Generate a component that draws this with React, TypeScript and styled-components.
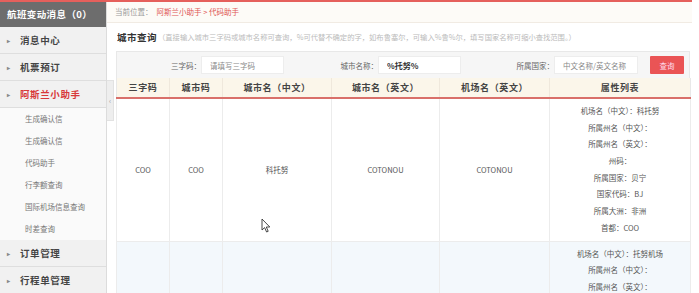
import styled, { createGlobalStyle } from "styled-components";

const GlobalStyle = createGlobalStyle`
  html, body {
    margin: 0;
    padding: 0;
    background: #fff;
    overflow: hidden;
  }
  body {
    font-family: "Noto Sans CJK SC", "Noto Sans", sans-serif;
    color: #555;
  }
`;

const SANS = `"Noto Sans CJK SC", "Noto Sans", sans-serif`;

const menuTop = [
  { label: "消息中心" },
  { label: "机票预订" },
  { label: "阿斯兰小助手", active: true },
];
const subItems = ["生成确认信", "生成确认信", "代码助手", "行李额查询", "国际机场信息查询", "时差查询"];
const menuBottom = ["订单管理", "行程单管理"];

const attrs1 = [
  "机场名（中文）：科托努",
  "所属州名（中文）：",
  "所属州名（英文）：",
  "州码：",
  "所属国家：贝宁",
  "国家代码：BJ",
  "所属大洲：非洲",
  "首都：COO",
];
const attrs2 = ["机场名（中文）：托努机场", "所属州名（中文）：", "所属州名（英文）：", "州码："];

const App = () => {
  return (
    <>
      <GlobalStyle />
      <Page>
        <TopLine />
        <Body>
          <Sidebar>
            <SideHeader>航班变动消息（0）</SideHeader>
            {menuTop.map((m) => (
              <MenuItem key={m.label} $active={m.active}>
                <Caret>▸</Caret>
                {m.label}
              </MenuItem>
            ))}
            <SubMenu>
              {subItems.map((s, i) => (
                <SubItem key={i}>{s}</SubItem>
              ))}
            </SubMenu>
            {menuBottom.map((m) => (
              <MenuItem key={m}>
                <Caret>▸</Caret>
                {m}
              </MenuItem>
            ))}
          </Sidebar>
          <Main>
            <Collapse>‹</Collapse>
            <Breadcrumb>
              当前位置：<Crumb>阿斯兰小助手 &gt; 代码助手</Crumb>
            </Breadcrumb>
            <Content>
              <TitleRow>
                <Title>城市查询</Title>
                <Hint>
                  （直接输入城市三字码或城市名称可查询，%可代替不确定的字，如布鲁塞尔，可输入%鲁%尔，填写国家名称可缩小查找范围。）
                </Hint>
              </TitleRow>
              <SearchBar>
                <Label $w={84}>三字码：</Label>
                <Input placeholder="请填写三字码" $w={83} />
                <Label $w={94}>城市名称：</Label>
                <Input defaultValue="%托努%" $w={83} $bold />
                <Label $w={93}>所属国家：</Label>
                <Input placeholder="中文名称/英文名称" $w={84} />
                <SearchButton>查询</SearchButton>
              </SearchBar>
              <Table>
                <colgroup>
                  <col style={{ width: 53 }} />
                  <col style={{ width: 53 }} />
                  <col style={{ width: 109 }} />
                  <col style={{ width: 108 }} />
                  <col style={{ width: 110 }} />
                  <col />
                </colgroup>
                <thead>
                  <tr>
                    <Th>三字码</Th>
                    <Th>城市码</Th>
                    <Th>城市名（中文）</Th>
                    <Th>城市名（英文）</Th>
                    <Th>机场名（英文）</Th>
                    <Th>属性列表</Th>
                  </tr>
                </thead>
                <tbody>
                  <tr>
                    <Td>COO</Td>
                    <Td>COO</Td>
                    <Td>科托努</Td>
                    <Td>COTONOU</Td>
                    <Td>COTONOU</Td>
                    <AttrCell>
                      {attrs1.map((a) => (
                        <AttrLine key={a}>{a}</AttrLine>
                      ))}
                    </AttrCell>
                  </tr>
                  <tr>
                    <Td $alt />
                    <Td $alt />
                    <Td $alt />
                    <Td $alt />
                    <Td $alt />
                    <AttrCell $alt>
                      {attrs2.map((a) => (
                        <AttrLine key={a}>{a}</AttrLine>
                      ))}
                    </AttrCell>
                  </tr>
                </tbody>
              </Table>
            </Content>
            <Cursor width="10" height="15" viewBox="0 0 10 15">
              <path d="M1 1 L1 12 L3.6 9.6 L5.6 14 L7.2 13.3 L5.3 9 L8.8 9 Z" fill="#fff" stroke="#333" strokeWidth="0.9" strokeLinejoin="round" />
            </Cursor>
          </Main>
        </Body>
      </Page>
    </>
  );
};

export default App;

const Page = styled.div`
  width: 692px;
  height: 293px;
  overflow: hidden;
`;

const TopLine = styled.div`
  height: 2px;
  background: #e5605c;
`;

const Body = styled.div`
  display: flex;
  align-items: flex-start;
`;

const Sidebar = styled.div`
  width: 106px;
  flex-shrink: 0;
  border-right: 1px solid #dcdcdc;
  background: #fafafa;
`;

const SideHeader = styled.div`
  height: 25px;
  line-height: 25px;
  padding-left: 7px;
  background: #6d6d6d;
  color: #fff;
  font-family: ${SANS};
  font-size: 9.5px;
  font-weight: bold;
  letter-spacing: 0.4px;
`;

const MenuItem = styled.div<{ $active?: boolean }>`
  display: flex;
  align-items: center;
  height: 26px;
  padding-left: 7px;
  background: #f1f1f1;
  border-bottom: 1px solid #dedede;
  color: ${(p) => (p.$active ? "#d8393a" : "#444")};
  font-family: ${SANS};
  font-size: 9.5px;
  font-weight: bold;
  letter-spacing: 0.6px;
`;

const Caret = styled.span`
  font-size: 6px;
  color: #888;
  width: 13px;
`;

const SubMenu = styled.div`
  background: #fafafa;
`;

const SubItem = styled.div`
  height: 22px;
  line-height: 22px;
  padding-left: 25px;
  font-size: 7.5px;
  color: #777;
`;

const Main = styled.div`
  position: relative;
  flex: 1;
  min-width: 0;
`;

const Collapse = styled.div`
  position: absolute;
  left: 0;
  top: 78px;
  width: 6px;
  height: 39px;
  background: #eee;
  border: 1px solid #e2e2e2;
  border-left: none;
  color: #999;
  font-size: 7px;
  line-height: 39px;
  text-align: center;
`;

const Breadcrumb = styled.div`
  height: 20px;
  line-height: 20px;
  padding-left: 8px;
  background: #fdfbf7;
  border-bottom: 1px solid #f1ebe3;
  font-size: 7.5px;
  color: #999;
`;

const Crumb = styled.span`
  color: #e05555;
  margin-left: 4px;
`;

const Content = styled.div`
  padding: 0 2px 0 9px;
`;

const TitleRow = styled.div`
  display: flex;
  align-items: center;
  height: 14px;
  margin: 7px 0 7px 1px;
  white-space: nowrap;
  overflow: hidden;
`;

const Title = styled.span`
  font-size: 9.5px;
  font-weight: bold;
  color: #333;
  letter-spacing: 0.5px;
`;

const Hint = styled.span`
  font-size: 7.3px;
  color: #bbb;
  margin-left: 1px;
`;

const SearchBar = styled.div`
  display: flex;
  align-items: center;
  height: 26px;
  background: #f6f6f6;
  border: 1px solid #e8e8e8;
  border-bottom: none;
`;

const Label = styled.span<{ $w: number }>`
  width: ${(p) => p.$w}px;
  flex-shrink: 0;
  text-align: right;
  font-size: 7.5px;
  color: #666;
`;

const Input = styled.input<{ $w: number; $bold?: boolean }>`
  box-sizing: border-box;
  width: ${(p) => p.$w}px;
  height: 18px;
  border: 1px solid #ededed;
  background: #fff;
  padding: 0 8px;
  font-family: ${SANS};
  font-size: ${(p) => (p.$bold ? "8px" : "7.5px")};
  font-weight: ${(p) => (p.$bold ? "bold" : "normal")};
  color: #333;
  outline: none;
  &::placeholder {
    color: #888;
  }
`;

const SearchButton = styled.button`
  margin-left: 12px;
  width: 34px;
  height: 18px;
  border: none;
  border-radius: 1px;
  background: #ea5455;
  color: #fde;
  font-family: ${SANS};
  font-size: 7.5px;
  padding: 0;
`;

const Table = styled.table`
  width: 575px;
  table-layout: fixed;
  border-collapse: collapse;
`;

const Th = styled.th`
  height: 19px;
  padding: 0;
  background: #fbf6ea;
  border-left: 1px solid #efe8dc;
  border-bottom: 2px solid #d9706a;
  font-size: 9px;
  font-weight: bold;
  color: #444;
  letter-spacing: 0.6px;
  &:first-child {
    border-left: 1px solid #e8e8e8;
  }
  &:last-child {
    border-right: 1px solid #e8e8e8;
  }
`;

const Td = styled.td<{ $alt?: boolean }>`
  padding: 0;
  border: 1px solid #ececec;
  background: ${(p) => (p.$alt ? "#f3f8fc" : "#fff")};
  text-align: center;
  vertical-align: middle;
  font-size: 7.5px;
  color: #555;
`;

const AttrCell = styled(Td)`
  padding: 4px 0;
  vertical-align: top;
`;

const AttrLine = styled.div`
  height: 16.7px;
  line-height: 16.7px;
  white-space: nowrap;
`;

const Cursor = styled.svg`
  position: absolute;
  left: 154px;
  top: 216px;
`;
